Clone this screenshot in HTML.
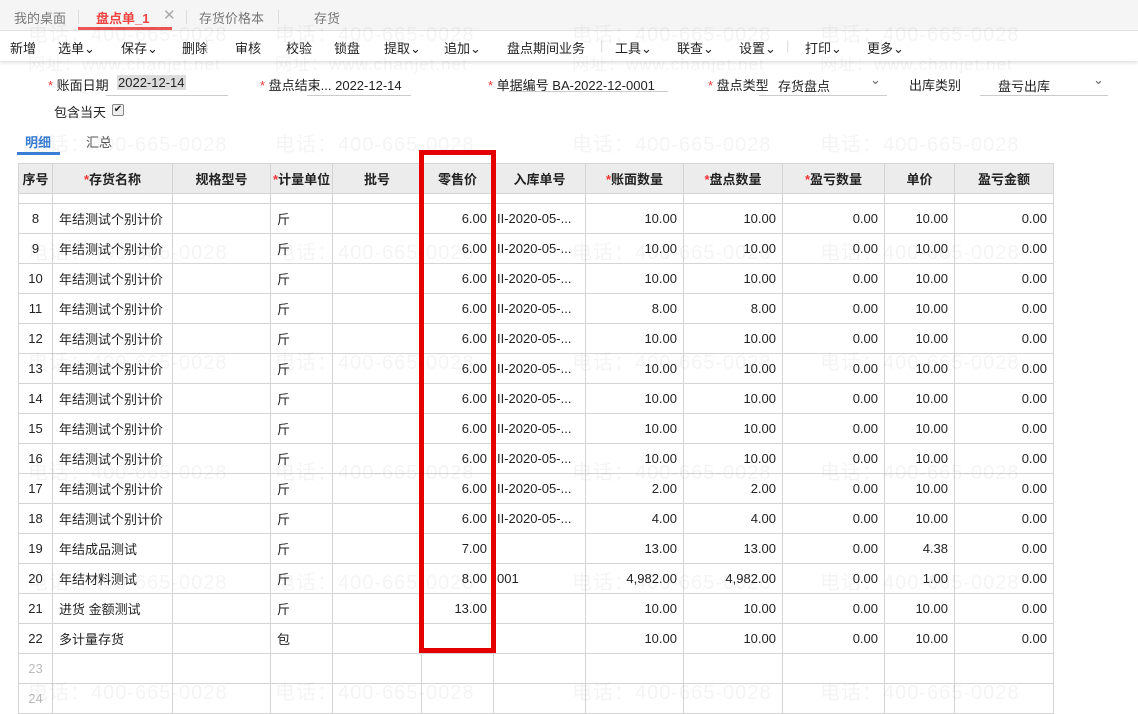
<!DOCTYPE html>
<html><head><meta charset="utf-8"><style>
*{margin:0;padding:0;box-sizing:border-box}
body{width:1138px;height:696px;overflow:hidden;background:#fff;font-family:"Liberation Sans","Noto Sans CJK SC",sans-serif;font-size:13px;color:#222;position:relative}
.abs{position:absolute;white-space:nowrap}
.top{position:absolute;left:0;top:0;width:1138px;height:31px;background:#f5f5f5;border-bottom:1px solid #e4e4e4}
.tb{position:absolute;left:0;top:31px;width:1138px;height:30px;background:#fff;box-shadow:0 2px 3px rgba(0,0,0,.12)}
.red{color:#e33}
.uline{position:absolute;height:1px;background:#ccc}
table{position:absolute;left:18px;top:163px;width:1035px;border-collapse:collapse;table-layout:fixed}
td,th{border:1px solid #d4d4d4;height:30px;padding:0 6px;font-size:13px;white-space:nowrap;overflow:hidden}
th{background:#ececec;font-weight:bold;text-align:center;padding:0 2px}
td.r{text-align:right}
td.c{text-align:center;padding:0}
td.n{padding:0 3px}
tr.gap td{height:10px}
.wm{position:absolute;color:rgba(0,0,0,.045);font-size:20px;white-space:nowrap;letter-spacing:1px}
</style></head><body>
<div class="top"></div>
<div class="abs" style="left:14px;top:8px;color:#777">我的桌面</div>
<div class="abs" style="left:96px;top:8px;color:#e44;font-weight:bold">盘点单_1</div>
<div class="abs" style="left:163px;top:6px;color:#aaa;font-size:15px">✕</div>
<div class="abs" style="left:78px;top:27px;width:94px;height:3px;background:#e55"></div>
<div class="abs" style="left:78px;top:10px;width:1px;height:14px;background:#ddd"></div>
<div class="abs" style="left:186px;top:10px;width:1px;height:14px;background:#ddd"></div>
<div class="abs" style="left:199px;top:8px;color:#777">存货价格本</div>
<div class="abs" style="left:278px;top:10px;width:1px;height:14px;background:#ddd"></div>
<div class="abs" style="left:314px;top:8px;color:#777">存货</div>
<div class="tb"></div>
<div class="abs" style="left:10px;top:38px">新增</div>
<div class="abs" style="left:58px;top:38px">选单⌄</div>
<div class="abs" style="left:121px;top:38px">保存⌄</div>
<div class="abs" style="left:182px;top:38px">删除</div>
<div class="abs" style="left:235px;top:38px">审核</div>
<div class="abs" style="left:286px;top:38px">校验</div>
<div class="abs" style="left:334px;top:38px">锁盘</div>
<div class="abs" style="left:384px;top:38px">提取⌄</div>
<div class="abs" style="left:444px;top:38px">追加⌄</div>
<div class="abs" style="left:507px;top:38px">盘点期间业务</div>
<div class="abs" style="left:615px;top:38px">工具⌄</div>
<div class="abs" style="left:677px;top:38px">联查⌄</div>
<div class="abs" style="left:739px;top:38px">设置⌄</div>
<div class="abs" style="left:786px;top:38px;color:#ddd">|</div>
<div class="abs" style="left:805px;top:38px">打印⌄</div>
<div class="abs" style="left:867px;top:38px">更多⌄</div>
<div class="abs" style="left:205px;top:38px;color:#ddd">|</div>
<div class="abs" style="left:252px;top:38px;color:#ddd">|</div>
<div class="abs" style="left:600px;top:38px;color:#ddd">|</div>

<div class="abs" style="left:48px;top:75px"><span class="red">* </span>账面日期</div>
<div class="abs" style="left:117px;top:75px;background:#ddd;padding:0 1px">2022-12-14</div>
<div class="uline" style="left:106px;top:95px;width:122px"></div>
<div class="abs" style="left:260px;top:75px"><span class="red">* </span>盘点结束... 2022-12-14</div>
<div class="uline" style="left:307px;top:95px;width:104px"></div>
<div class="abs" style="left:488px;top:75px"><span class="red">* </span>单据编号 BA-2022-12-0001</div>
<div class="uline" style="left:509px;top:91px;width:159px"></div>
<div class="abs" style="left:708px;top:75px"><span class="red">* </span>盘点类型</div>
<div class="abs" style="left:778px;top:76px">存货盘点</div>
<div class="abs" style="left:870px;top:72px;color:#666">⌄</div>
<div class="uline" style="left:759px;top:95px;width:128px"></div>
<div class="abs" style="left:909px;top:75px">出库类别</div>
<div class="abs" style="left:998px;top:76px">盘亏出库</div>
<div class="abs" style="left:1093px;top:72px;color:#666">⌄</div>
<div class="uline" style="left:980px;top:95px;width:128px"></div>
<div class="abs" style="left:54px;top:102px">包含当天</div>
<div class="abs" style="left:112px;top:104px;width:12px;height:12px;border:1px solid #888;border-radius:2px;font-size:10px;line-height:10px;text-align:center;background:#eee">✔</div>
<div class="abs" style="left:25px;top:132px;color:#3a7fd5;font-weight:bold">明细</div>
<div class="abs" style="left:86px;top:132px;color:#555">汇总</div>
<div class="abs" style="left:17px;top:152px;width:43px;height:3px;background:#3a7fd5"></div>

<table>
<colgroup><col style="width:34px"><col style="width:120px"><col style="width:98px"><col style="width:62px"><col style="width:89px"><col style="width:72px"><col style="width:92px"><col style="width:98px"><col style="width:99px"><col style="width:102px"><col style="width:70px"><col style="width:99px"></colgroup>
<tr><th>序号</th><th><span class="red">*</span>存货名称</th><th>规格型号</th><th><span class="red">*</span>计量单位</th><th>批号</th><th>零售价</th><th>入库单号</th><th><span class="red">*</span>账面数量</th><th><span class="red">*</span>盘点数量</th><th><span class="red">*</span>盈亏数量</th><th>单价</th><th>盈亏金额</th></tr>
<tr class="gap"><td></td><td></td><td></td><td></td><td></td><td></td><td></td><td></td><td></td><td></td><td></td><td></td></tr>
<tr><td class="c">8</td><td>年结测试个别计价</td><td></td><td>斤</td><td></td><td class="r">6.00</td><td class="n">II-2020-05-...</td><td class="r">10.00</td><td class="r">10.00</td><td class="r">0.00</td><td class="r">10.00</td><td class="r">0.00</td></tr>
<tr><td class="c">9</td><td>年结测试个别计价</td><td></td><td>斤</td><td></td><td class="r">6.00</td><td class="n">II-2020-05-...</td><td class="r">10.00</td><td class="r">10.00</td><td class="r">0.00</td><td class="r">10.00</td><td class="r">0.00</td></tr>
<tr><td class="c">10</td><td>年结测试个别计价</td><td></td><td>斤</td><td></td><td class="r">6.00</td><td class="n">II-2020-05-...</td><td class="r">10.00</td><td class="r">10.00</td><td class="r">0.00</td><td class="r">10.00</td><td class="r">0.00</td></tr>
<tr><td class="c">11</td><td>年结测试个别计价</td><td></td><td>斤</td><td></td><td class="r">6.00</td><td class="n">II-2020-05-...</td><td class="r">8.00</td><td class="r">8.00</td><td class="r">0.00</td><td class="r">10.00</td><td class="r">0.00</td></tr>
<tr><td class="c">12</td><td>年结测试个别计价</td><td></td><td>斤</td><td></td><td class="r">6.00</td><td class="n">II-2020-05-...</td><td class="r">10.00</td><td class="r">10.00</td><td class="r">0.00</td><td class="r">10.00</td><td class="r">0.00</td></tr>
<tr><td class="c">13</td><td>年结测试个别计价</td><td></td><td>斤</td><td></td><td class="r">6.00</td><td class="n">II-2020-05-...</td><td class="r">10.00</td><td class="r">10.00</td><td class="r">0.00</td><td class="r">10.00</td><td class="r">0.00</td></tr>
<tr><td class="c">14</td><td>年结测试个别计价</td><td></td><td>斤</td><td></td><td class="r">6.00</td><td class="n">II-2020-05-...</td><td class="r">10.00</td><td class="r">10.00</td><td class="r">0.00</td><td class="r">10.00</td><td class="r">0.00</td></tr>
<tr><td class="c">15</td><td>年结测试个别计价</td><td></td><td>斤</td><td></td><td class="r">6.00</td><td class="n">II-2020-05-...</td><td class="r">10.00</td><td class="r">10.00</td><td class="r">0.00</td><td class="r">10.00</td><td class="r">0.00</td></tr>
<tr><td class="c">16</td><td>年结测试个别计价</td><td></td><td>斤</td><td></td><td class="r">6.00</td><td class="n">II-2020-05-...</td><td class="r">10.00</td><td class="r">10.00</td><td class="r">0.00</td><td class="r">10.00</td><td class="r">0.00</td></tr>
<tr><td class="c">17</td><td>年结测试个别计价</td><td></td><td>斤</td><td></td><td class="r">6.00</td><td class="n">II-2020-05-...</td><td class="r">2.00</td><td class="r">2.00</td><td class="r">0.00</td><td class="r">10.00</td><td class="r">0.00</td></tr>
<tr><td class="c">18</td><td>年结测试个别计价</td><td></td><td>斤</td><td></td><td class="r">6.00</td><td class="n">II-2020-05-...</td><td class="r">4.00</td><td class="r">4.00</td><td class="r">0.00</td><td class="r">10.00</td><td class="r">0.00</td></tr>
<tr><td class="c">19</td><td>年结成品测试</td><td></td><td>斤</td><td></td><td class="r">7.00</td><td></td><td class="r">13.00</td><td class="r">13.00</td><td class="r">0.00</td><td class="r">4.38</td><td class="r">0.00</td></tr>
<tr><td class="c">20</td><td>年结材料测试</td><td></td><td>斤</td><td></td><td class="r">8.00</td><td class="n">001</td><td class="r">4,982.00</td><td class="r">4,982.00</td><td class="r">0.00</td><td class="r">1.00</td><td class="r">0.00</td></tr>
<tr><td class="c">21</td><td>进货 金额测试</td><td></td><td>斤</td><td></td><td class="r">13.00</td><td></td><td class="r">10.00</td><td class="r">10.00</td><td class="r">0.00</td><td class="r">10.00</td><td class="r">0.00</td></tr>
<tr><td class="c">22</td><td>多计量存货</td><td></td><td>包</td><td></td><td class="r"></td><td></td><td class="r">10.00</td><td class="r">10.00</td><td class="r">0.00</td><td class="r">10.00</td><td class="r">0.00</td></tr>
<tr><td class="c" style="color:#bbb">23</td><td></td><td></td><td></td><td></td><td></td><td></td><td></td><td></td><td></td><td></td><td></td></tr>
<tr><td class="c" style="color:#bbb">24</td><td></td><td></td><td></td><td></td><td></td><td></td><td></td><td></td><td></td><td></td><td></td></tr>
</table>

<div class="abs" style="left:419px;top:150px;width:77px;height:503px;border:5px solid #e50000"></div>

<div class="wm" style="left:28px;top:18px">电话：400-665-0028</div>
<div class="wm" style="left:28px;top:50px;font-size:17px">网址：www.chanjet.net</div>
<div class="wm" style="left:275px;top:18px">电话：400-665-0028</div>
<div class="wm" style="left:275px;top:50px;font-size:17px">网址：www.chanjet.net</div>
<div class="wm" style="left:572px;top:18px">电话：400-665-0028</div>
<div class="wm" style="left:572px;top:50px;font-size:17px">网址：www.chanjet.net</div>
<div class="wm" style="left:820px;top:18px">电话：400-665-0028</div>
<div class="wm" style="left:820px;top:50px;font-size:17px">网址：www.chanjet.net</div>
<div class="wm" style="left:28px;top:128px">电话：400-665-0028</div>
<div class="wm" style="left:275px;top:128px">电话：400-665-0028</div>
<div class="wm" style="left:572px;top:128px">电话：400-665-0028</div>
<div class="wm" style="left:820px;top:128px">电话：400-665-0028</div>
<div class="wm" style="left:28px;top:236px">电话：400-665-0028</div>
<div class="wm" style="left:275px;top:236px">电话：400-665-0028</div>
<div class="wm" style="left:572px;top:236px">电话：400-665-0028</div>
<div class="wm" style="left:820px;top:236px">电话：400-665-0028</div>
<div class="wm" style="left:28px;top:346px">电话：400-665-0028</div>
<div class="wm" style="left:275px;top:346px">电话：400-665-0028</div>
<div class="wm" style="left:572px;top:346px">电话：400-665-0028</div>
<div class="wm" style="left:820px;top:346px">电话：400-665-0028</div>
<div class="wm" style="left:28px;top:456px">电话：400-665-0028</div>
<div class="wm" style="left:275px;top:456px">电话：400-665-0028</div>
<div class="wm" style="left:572px;top:456px">电话：400-665-0028</div>
<div class="wm" style="left:820px;top:456px">电话：400-665-0028</div>
<div class="wm" style="left:28px;top:566px">电话：400-665-0028</div>
<div class="wm" style="left:275px;top:566px">电话：400-665-0028</div>
<div class="wm" style="left:572px;top:566px">电话：400-665-0028</div>
<div class="wm" style="left:820px;top:566px">电话：400-665-0028</div>
<div class="wm" style="left:28px;top:676px">电话：400-665-0028</div>
<div class="wm" style="left:275px;top:676px">电话：400-665-0028</div>
<div class="wm" style="left:572px;top:676px">电话：400-665-0028</div>
<div class="wm" style="left:820px;top:676px">电话：400-665-0028</div>
</body></html>
